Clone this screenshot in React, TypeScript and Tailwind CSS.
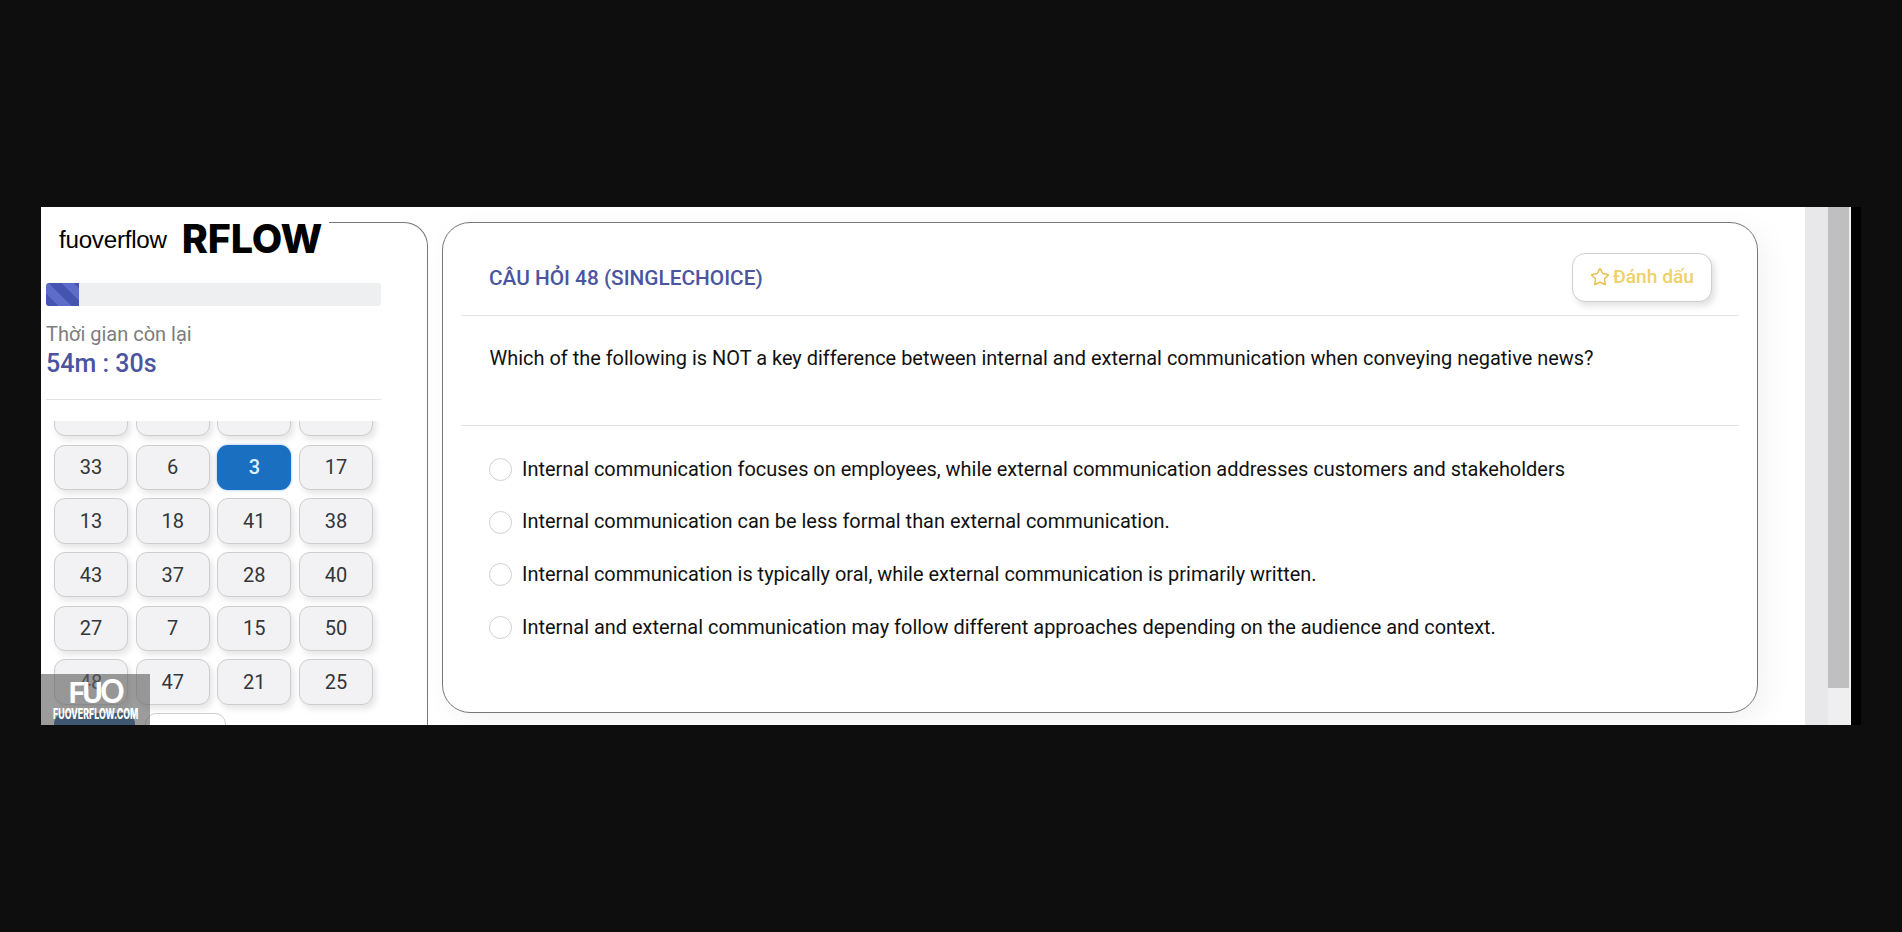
import { Star } from "lucide-react"

const questions = ["", "", "", "", "33", "6", "3", "17", "13", "18", "41", "38", "43", "37", "28", "40", "27", "7", "15", "50", "48", "47", "21", "25"]

const answers = [
  "Internal communication focuses on employees, while external communication addresses customers and stakeholders",
  "Internal communication can be less formal than external communication.",
  "Internal communication is typically oral, while external communication is primarily written.",
  "Internal and external communication may follow different approaches depending on the audience and context.",
]

export default function App() {
  return (
    <div className="h-screen overflow-hidden bg-[#0e0e0e] pt-[207px] pl-[41px] font-['Roboto',sans-serif]">
      <div className="flex h-[518px] w-[1820px]">
        <div className="relative flex h-full w-[1764px] gap-[14px] overflow-hidden bg-white pt-[15px]">
          {/* sidebar */}
          <aside className="flex h-[520px] w-[387px] shrink-0 flex-col rounded-tr-[24px] border-t border-r border-[#777] bg-white">
            <div className="-mt-px flex h-[41px] w-[288px] gap-[15px] bg-white pl-[18px]">
              <span className="pt-[2px] font-['Liberation_Sans',sans-serif] text-[24.2px] leading-[32px] tracking-[-0.25px] text-black">fuoverflow</span>
              <span className="-mt-px font-['Inter',sans-serif] text-[39.5px] leading-[36px] font-extrabold tracking-[-0.2px] text-black">RFLOW</span>
            </div>
            <div className="mt-[20px] ml-[5px] h-[23px] w-[335px] overflow-hidden rounded-[3px] bg-[#eeeff1]">
              <div className="h-full w-[33px] bg-[repeating-linear-gradient(45deg,#4454b0_0,#4454b0_9px,#5c6cc8_9px,#5c6cc8_18px)]" />
            </div>
            <div className="mt-[15px] ml-[5px] text-[20px] leading-[26px] text-[#7d7d7d]">Thời gian còn lại</div>
            <div className="mt-px ml-[5px] text-[25px] leading-[31px] font-medium text-[#4b559f]">54m : 30s</div>
            <div className="mt-[20px] ml-[5px] w-[335px] border-t border-[#e2e2e2]" />
            <div className="mt-[21px] min-h-0 flex-1 overflow-hidden pl-[13px]">
              <div className="-mt-[30px] grid w-[319px] grid-cols-4 gap-x-[7.6px] gap-y-[8.3px]">
                {questions.map((q, i) => (
                  <button
                    key={i}
                    className={
                      q === "3"
                        ? "h-[45.4px] rounded-[11px] bg-[#1a6fc1] text-[20px] font-medium text-[#d8f3ff] shadow-[0_0_3px_rgba(60,140,220,0.6)]"
                        : "h-[45.4px] rounded-[11px] border border-[#cdcdcd] bg-[#f2f2f4] text-[20px] text-[#33363a] shadow-[3px_4px_6px_rgba(0,0,0,0.1)]"
                    }
                  >
                    {q}
                  </button>
                ))}
              </div>
              <div className="mt-[8.4px] flex gap-[10px]">
                <button className="h-[45px] w-[81px] rounded-[11px] bg-[#0d4a8f]" />
                <button className="h-[45px] w-[81px] rounded-[11px] border border-[#cdcdcd] bg-white" />
              </div>
            </div>
          </aside>

          {/* question card */}
          <main className="flex h-[491px] w-[1316px] shrink-0 flex-col rounded-[28px] border border-[#777] bg-white px-[18px] shadow-[8px_8px_30px_rgba(0,0,0,0.05)]">
            <div className="flex h-[93px] shrink-0 items-center justify-between border-b border-[#e3e3e3] pt-[20px] pr-[27px] pl-[28px]">
              <h2 className="text-[20.8px] font-medium text-[#4b559f]">CÂU HỎI 48 (SINGLECHOICE)</h2>
              <button className="-mt-[4px] flex h-[49px] w-[140px] items-center justify-center gap-[3px] rounded-[13px] border border-[#cfcfcf] bg-white text-[19.2px] font-medium text-[#efd06a] shadow-[3px_4px_6px_rgba(0,0,0,0.12)]">
                <Star size={20} strokeWidth={1.8} className="text-[#e8c050]" />
                Đánh dấu
              </button>
            </div>
            <div className="h-[110px] shrink-0 border-b border-[#e3e3e3] pt-[27px] pl-[28.5px] text-[19.95px] leading-[30px] text-[#111]">
              Which of the following is NOT a key difference between internal and external communication when conveying negative news?
            </div>
            <div className="flex flex-col gap-[29.7px] pt-[32px] pl-[28px]">
              {answers.map((a) => (
                <label key={a} className="flex h-[23px] items-center gap-[10px] text-[19.95px] text-[#111]">
                  <span className="h-[23px] w-[23px] shrink-0 rounded-full border border-[#cfcfcf] bg-white" />
                  <span>{a}</span>
                </label>
              ))}
            </div>
          </main>

          {/* watermark */}
          <div className="absolute bottom-0 left-0 flex h-[51px] w-[109px] flex-col items-center bg-[rgba(95,95,95,0.62)] text-white">
            <div className="mt-[3px] h-[28px] font-['Inter',sans-serif] text-[28px] leading-[28px] font-bold tracking-[-3px] whitespace-nowrap">
              FU<span className="text-[33px] leading-[28px] font-semibold">O</span>
            </div>
            <div className="mt-[1px] origin-center scale-x-[0.63] font-['Inter',sans-serif] text-[14px] leading-[16px] font-extrabold whitespace-nowrap">FUOVERFLOW.COM</div>
          </div>
        </div>

        {/* scrollbar */}
        <div className="flex h-full w-[46px] shrink-0">
          <div className="w-[23px] bg-[#e8e8ea]" />
          <div className="w-[23px] bg-[#efefef] pr-[2px]">
            <div className="h-[481px] bg-[#bfbfbf]" />
          </div>
        </div>
        <div className="h-full w-[10px] shrink-0 bg-black" />
      </div>
    </div>
  )
}
